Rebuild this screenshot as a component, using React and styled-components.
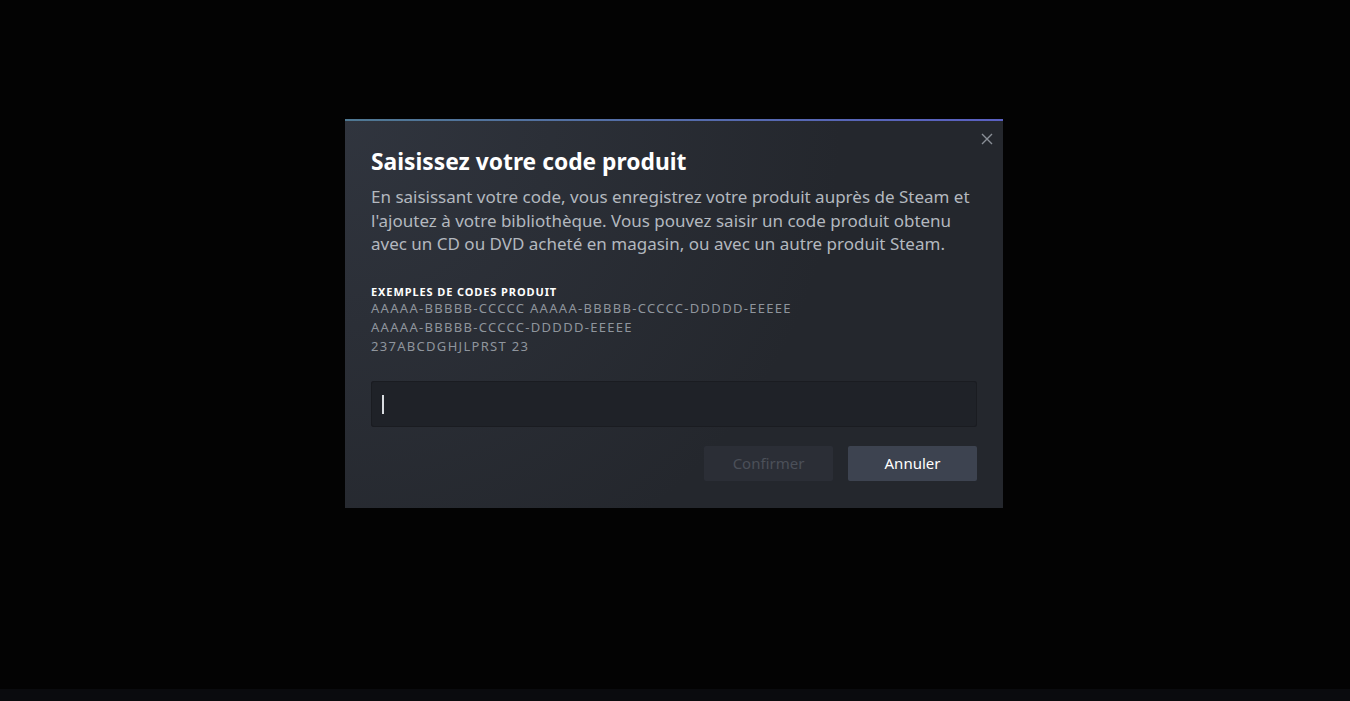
import React from 'react'
import styled, { createGlobalStyle } from 'styled-components'

const GlobalStyle = createGlobalStyle`
    html, body {
        margin: 0;
        padding: 0;
        background: #030303;
        height: 100%;
    }
    #root {
        height: 100%;
    }
`

const Page = styled.div`
    width: 100vw;
    height: 100vh;
    display: flex;
    flex-direction: column;
    background: #030303;
    font-family: "Noto Sans", "Open Sans", sans-serif;
    overflow: hidden;
`

const Stage = styled.div`
    flex: 1;
    display: flex;
    justify-content: center;
    align-items: flex-start;
    padding-top: 119px;
    padding-right: 2px;
`

const BottomStrip = styled.div`
    height: 12px;
    background: #0a0b0e;
`

const Dialog = styled.div`
    position: relative;
    width: 658px;
    box-sizing: border-box;
    padding: 28px 26px 27px;
    background:
        radial-gradient(circle at top left, rgba(58, 64, 76, 0.55) 0%, rgba(58, 64, 76, 0) 65%),
        #24272d;
    &::before {
        content: '';
        position: absolute;
        left: 0;
        right: 0;
        top: 0;
        height: 2px;
        background: linear-gradient(to right, #4f7892, #5a60c2);
    }
`

const CloseButton = styled.button`
    position: absolute;
    top: 14px;
    right: 8px;
    width: 14px;
    height: 14px;
    padding: 0;
    border: none;
    background: transparent;
    color: #8a8f97;
    display: flex;
    cursor: pointer;
`

const Title = styled.h1`
    margin: 0;
    font-size: 22.8px;
    font-weight: 700;
    color: #ffffff;
    line-height: 29px;
`

const Description = styled.p`
    margin: 9px 0 0;
    font-size: 17px;
    line-height: 23.5px;
    color: #b3b8bf;
`

const Examples = styled.div`
    margin-top: 29px;
    display: flex;
    flex-direction: column;
`

const ExamplesLabel = styled.div`
    font-size: 11px;
    font-weight: 700;
    letter-spacing: 0.9px;
    text-transform: uppercase;
    color: #ffffff;
    line-height: 14px;
`

const CodeLine = styled.div`
    font-size: 13px;
    letter-spacing: 1.3px;
    color: #8f959d;
    line-height: 19px;
`

const CodeInput = styled.div`
    margin-top: 25px;
    height: 46px;
    box-sizing: border-box;
    background: #1f2228;
    border-radius: 3px;
    box-shadow: inset 0 0 0 1px #1a1c21;
    display: flex;
    align-items: center;
    padding-left: 11px;
`

const Caret = styled.div`
    width: 2px;
    height: 19px;
    margin-top: 2px;
    background: #d9dce0;
`

const Actions = styled.div`
    margin-top: 19px;
    display: flex;
    justify-content: flex-end;
    gap: 15px;
`

const Button = styled.button`
    width: 129px;
    height: 35px;
    border: none;
    border-radius: 2px;
    font-family: inherit;
    font-size: 15px;
    background: ${(props) => props.disabled ? '#2b2e36' : '#3d4350'};
    color: ${(props) => props.disabled ? '#4b5059' : '#ffffff'};
    cursor: ${(props) => props.disabled ? 'default' : 'pointer'};
`

const codes = [
    'AAAAA-BBBBB-CCCCC AAAAA-BBBBB-CCCCC-DDDDD-EEEEE',
    'AAAAA-BBBBB-CCCCC-DDDDD-EEEEE',
    '237ABCDGHJLPRST 23',
]

export default function App() {
    return (
        <Page>
            <GlobalStyle />
            <Stage>
                <Dialog>
                    <CloseButton aria-label="Fermer">
                        <svg width="12" height="12" viewBox="0 0 12 12">
                            <path d="M1 1 L11 11 M11 1 L1 11" stroke="currentColor" strokeWidth="1.4" fill="none" />
                        </svg>
                    </CloseButton>
                    <Title>Saisissez votre code produit</Title>
                    <Description>
                        En saisissant votre code, vous enregistrez votre produit auprès de Steam et
                        l'ajoutez à votre bibliothèque. Vous pouvez saisir un code produit obtenu
                        avec un CD ou DVD acheté en magasin, ou avec un autre produit Steam.
                    </Description>
                    <Examples>
                        <ExamplesLabel>Exemples de codes produit</ExamplesLabel>
                        {codes.map((c) => <CodeLine key={c}>{c}</CodeLine>)}
                    </Examples>
                    <CodeInput>
                        <Caret />
                    </CodeInput>
                    <Actions>
                        <Button disabled>Confirmer</Button>
                        <Button>Annuler</Button>
                    </Actions>
                </Dialog>
            </Stage>
            <BottomStrip />
        </Page>
    )
}
